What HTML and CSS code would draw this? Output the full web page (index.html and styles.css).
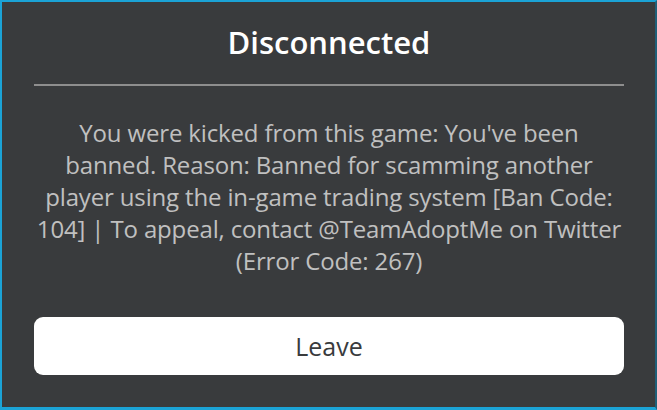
FILE: index.html
```html
<!DOCTYPE html>
<html lang="en">
<head>
    <meta charset="UTF-8">
    <title>Disconnected</title>
    <link rel="stylesheet" href="styles.css">
</head>
<body>
    <div class="prompt">
        <h1 class="title">Disconnected</h1>
        <hr class="divider">
        <p class="message">You were kicked from this game: You've been banned. Reason: Banned for scamming another player using the in-game trading system [Ban Code: 104] | To appeal, contact @TeamAdoptMe on Twitter (Error Code: 267)</p>
        <button class="leave">Leave</button>
    </div>
</body>
</html>
```

FILE: styles.css
```css
html, body {
    margin: 0;
    height: 100%;
}

body {
    font-family: 'Open Sans', 'Noto Sans', sans-serif;
    background: #393b3d;
    box-sizing: border-box;
    border-left: 2px solid #1ba3d6;
    border-top: 2px solid #1ba3d6;
    border-bottom: 3px solid #1ba3d6;
    border-right: 2px solid #1f5f78;
}

.prompt {
    padding: 22px 31px 0 32px;
    display: flex;
    flex-direction: column;
}

.title {
    margin: 0;
    text-align: center;
    color: #fff;
    font-size: 31px;
    font-weight: 600;
    line-height: 36px;
}

.divider {
    margin: 24px 0 0;
    border: none;
    height: 2px;
    background: #8e8e8e;
}

.message {
    margin: 31px 0 0;
    text-align: center;
    color: #c0c0c0;
    font-size: 24px;
    line-height: 32px;
    letter-spacing: -0.15px;
}

.leave {
    margin-top: 40px;
    height: 58px;
    background: #fff;
    border: none;
    border-radius: 9px;
    font-family: inherit;
    font-size: 25px;
    color: #393b3d;
}
```
